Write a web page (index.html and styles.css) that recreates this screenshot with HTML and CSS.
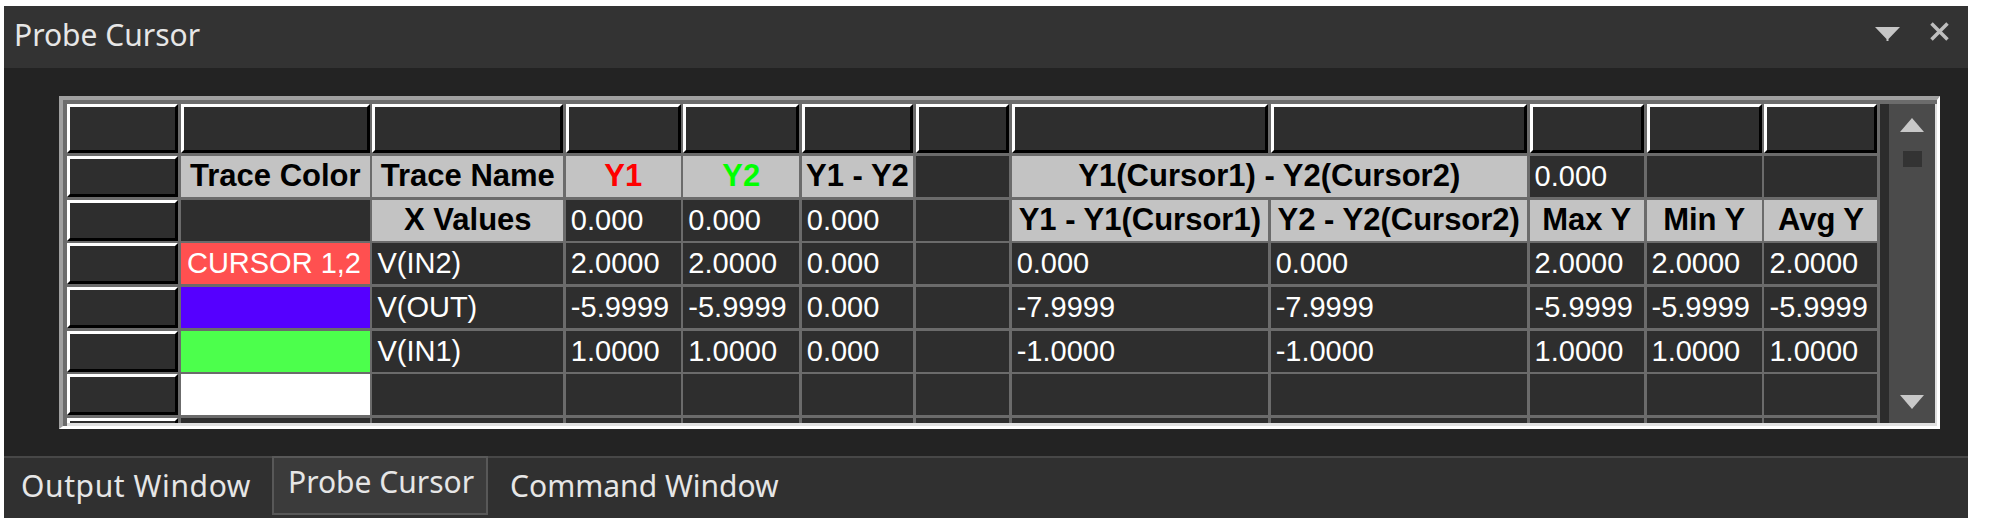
FILE: index.html
```html
<!DOCTYPE html>
<html lang="en">
    <head>
        <meta charset="UTF-8">
        <meta name="viewport" content="width=device-width, initial-scale=1.0">
        <title>Probe Cursor</title>
        <link rel="stylesheet" href="styles.css">
  </head>
  <body>
    <div class="panel">
        <div class="titlebar">
            <span class="title">Probe Cursor</span>
            <div class="title-icons">
                <svg width="25" height="14" viewBox="0 0 25 14"><polygon points="0,0 25,0 13.5,12 13.5,14 11.5,14 11.5,12" fill="#c6c6c6"/></svg>
                <svg width="19" height="19" viewBox="0 0 19 19"><path d="M1.5 1.5L17.5 17.5M17.5 1.5L1.5 17.5" stroke="#bebebe" stroke-width="3.5"/></svg>
            </div>
        </div>
        <div class="content">
            <div class="frame">
                <div class="frame-inner">
                    <div class="grid">
                        <!-- row 0: column headers -->
                        <div class="c rh"></div><div class="c rh"></div><div class="c rh"></div><div class="c rh"></div>
                        <div class="c rh"></div><div class="c rh"></div><div class="c rh"></div><div class="c rh"></div>
                        <div class="c rh"></div><div class="c rh"></div><div class="c rh"></div><div class="c rh"></div>
                        <!-- row 1 -->
                        <div class="c rh"></div>
                        <div class="c hd">Trace Color</div>
                        <div class="c hd">Trace Name</div>
                        <div class="c hd y1">Y1</div>
                        <div class="c hd y2">Y2</div>
                        <div class="c hd">Y1 - Y2</div>
                        <div class="c"></div>
                        <div class="c hd span2">Y1(Cursor1) - Y2(Cursor2)</div>
                        <div class="c">0.000</div>
                        <div class="c"></div>
                        <div class="c"></div>
                        <!-- row 2 -->
                        <div class="c rh"></div>
                        <div class="c"></div>
                        <div class="c hd">X Values</div>
                        <div class="c">0.000</div>
                        <div class="c">0.000</div>
                        <div class="c">0.000</div>
                        <div class="c"></div>
                        <div class="c hd">Y1 - Y1(Cursor1)</div>
                        <div class="c hd">Y2 - Y2(Cursor2)</div>
                        <div class="c hd">Max Y</div>
                        <div class="c hd">Min Y</div>
                        <div class="c hd">Avg Y</div>
                        <!-- row 3 -->
                        <div class="c rh"></div>
                        <div class="c sw-red">CURSOR 1,2</div>
                        <div class="c">V(IN2)</div>
                        <div class="c">2.0000</div>
                        <div class="c">2.0000</div>
                        <div class="c">0.000</div>
                        <div class="c"></div>
                        <div class="c">0.000</div>
                        <div class="c">0.000</div>
                        <div class="c">2.0000</div>
                        <div class="c">2.0000</div>
                        <div class="c">2.0000</div>
                        <!-- row 4 -->
                        <div class="c rh"></div>
                        <div class="c sw-blue"></div>
                        <div class="c">V(OUT)</div>
                        <div class="c">-5.9999</div>
                        <div class="c">-5.9999</div>
                        <div class="c">0.000</div>
                        <div class="c"></div>
                        <div class="c">-7.9999</div>
                        <div class="c">-7.9999</div>
                        <div class="c">-5.9999</div>
                        <div class="c">-5.9999</div>
                        <div class="c">-5.9999</div>
                        <!-- row 5 -->
                        <div class="c rh"></div>
                        <div class="c sw-green"></div>
                        <div class="c">V(IN1)</div>
                        <div class="c">1.0000</div>
                        <div class="c">1.0000</div>
                        <div class="c">0.000</div>
                        <div class="c"></div>
                        <div class="c">-1.0000</div>
                        <div class="c">-1.0000</div>
                        <div class="c">1.0000</div>
                        <div class="c">1.0000</div>
                        <div class="c">1.0000</div>
                        <!-- row 6 -->
                        <div class="c rh"></div>
                        <div class="c sw-white"></div>
                        <div class="c"></div><div class="c"></div><div class="c"></div><div class="c"></div><div class="c"></div>
                        <div class="c"></div><div class="c"></div><div class="c"></div><div class="c"></div><div class="c"></div>
                        <!-- row 7 (cut off) -->
                        <div class="c rh"></div>
                        <div class="c"></div><div class="c"></div><div class="c"></div><div class="c"></div><div class="c"></div><div class="c"></div>
                        <div class="c"></div><div class="c"></div><div class="c"></div><div class="c"></div><div class="c"></div>
                    </div>
                    <div class="strip"></div>
                    <div class="scrollbar">
                        <svg class="arrow-up" width="24" height="14" viewBox="0 0 24 14"><polygon points="12,0 24,14 0,14" fill="#c8c8c8"/></svg>
                        <div class="thumb"></div>
                        <svg class="arrow-down" width="24" height="14" viewBox="0 0 24 14"><polygon points="0,0 24,0 12,14" fill="#c8c8c8"/></svg>
                    </div>
                </div>
            </div>
        </div>
        <div class="tabs">
            <div class="tab first">Output Window</div>
            <div class="tab active">Probe Cursor</div>
            <div class="tab last">Command Window</div>
        </div>
    </div>
  </body>
</html>
```

FILE: styles.css
```css
body {
    margin: 0;
    padding: 6px 0 0 4px;
    background: #fff;
    font-family: "Liberation Sans", Arial, sans-serif;
}
.panel {
    width: 1964px;
    background: #232323;
}
.titlebar {
    height: 62px;
    box-sizing: border-box;
    padding: 8px 0 0 10px;
    background: #333;
    display: flex;
    align-items: flex-start;
}
.title {
    font-family: "Noto Sans", sans-serif;
    font-size: 30px;
    color: #e6e6e6;
}
.title-icons {
    margin-left: auto;
    height: 27px;
    display: flex;
    align-items: flex-end;
    gap: 30px;
    padding-right: 19px;
}
.content {
    height: 388px;
    box-sizing: border-box;
    padding: 28px 0 0 55px;
}
.frame {
    width: 1868px;
    border-style: solid;
    border-width: 4px 3px 3px 4px;
    border-color: #a0a0a0 #fff #fff #a0a0a0;
    padding: 4px 2px 3px 4px;
    box-shadow: inset 4px 4px 0 #6c6c6c, inset -2px -3px 0 #e0e0e0;
}
.frame-inner {
    height: 319px;
    display: flex;
    overflow: hidden;
    background: #2e2e2e;
}
.grid {
    flex: none;
    display: grid;
    grid-template-columns: 111.3px 188.8px 190.8px 114.8px 115.8px 111.3px 93.3px 256.3px 256.3px 114.3px 115.3px 113px;
    grid-template-rows: 49.33px repeat(7, 41px);
    gap: 2.67px;
    padding-right: 2.67px;
    align-content: start;
    background: #6b6b6b;
}
.c {
    background: #2e2e2e;
    color: #fff;
    font-size: 29px;
    display: flex;
    align-items: center;
    padding-left: 5px;
    white-space: nowrap;
    overflow: hidden;
}
.rh {
    border-style: solid;
    border-width: 3px;
    border-color: #fff #000 #000 #fff;
}
.hd {
    background: #c3c3c3;
    color: #000;
    font-weight: bold;
    font-size: 31px;
    justify-content: center;
    padding-left: 0;
}
.span2 { grid-column: span 2; }
.y1 { color: #ff0000; }
.y2 { color: #00ff00; }
.sw-red { background: #ff5050; padding-left: 6px; }
.sw-blue { background: #5500ff; }
.sw-green { background: #4cff4c; }
.sw-white { background: #fff; }
.strip {
    flex: none;
    width: 9px;
    background: #2c2c2c;
}
.scrollbar {
    flex: none;
    width: 46px;
    background: #4b4b4b;
    display: flex;
    flex-direction: column;
    align-items: center;
}
.arrow-up { margin-top: 14px; }
.thumb {
    width: 19px;
    height: 16px;
    margin-top: 19px;
    background: #333;
}
.arrow-down { margin-top: auto; margin-bottom: 14px; }
.tabs {
    height: 62px;
    display: flex;
    background: #303030;
    box-shadow: inset 0 2px 0 #474747;
}
.tab {
    height: 59px;
    box-sizing: border-box;
    padding: 7px 15px 0;
    border: 2px solid transparent;
    font-family: "Noto Sans", sans-serif;
    font-size: 30px;
    color: #e6e6e6;
}
.tab.first {
    letter-spacing: 0.6px;
    padding-right: 19px;
}
.tab.last { padding-left: 20px; }
.tab.active {
    background: #3b3b3b;
    border-color: #585858;
    padding: 3px 12px 0 14px;
}
```
